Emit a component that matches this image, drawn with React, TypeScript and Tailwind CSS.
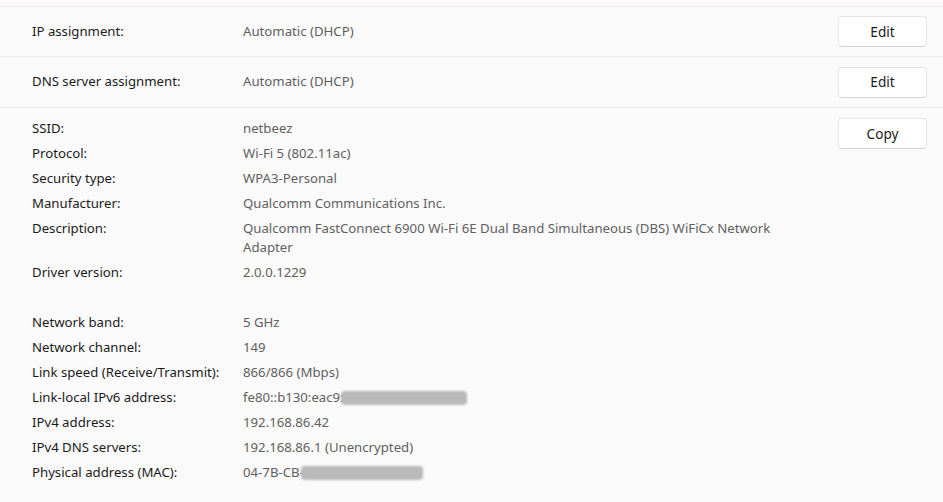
import React from "react";

const Btn = ({ children }: { children: React.ReactNode }) => (
  <button className="w-[89px] h-[31px] shrink-0 rounded-[4px] border border-[#e5e5e5] border-b-[#d4d4d4] bg-white text-[13.6px] text-[#1b1b1b] leading-none">
    {children}
  </button>
);

const Blur = ({ w }: { w: number }) => (
  <span
    className="inline-block align-middle h-[14px] rounded-[4px] bg-[#b9b9b9] blur-[1px] -ml-[3px]"
    style={{ width: w }}
  />
);

const details: [string, React.ReactNode][] = [
  ["SSID:", "netbeez"],
  ["Protocol:", "Wi-Fi 5 (802.11ac)"],
  ["Security type:", "WPA3-Personal"],
  ["Manufacturer:", "Qualcomm Communications Inc."],
  [
    "Description:",
    "Qualcomm FastConnect 6900 Wi-Fi 6E Dual Band Simultaneous (DBS) WiFiCx Network Adapter",
  ],
  ["Driver version:", "2.0.0.1229"],
  ["", ""],
  ["Network band:", "5 GHz"],
  ["Network channel:", "149"],
  ["Link speed (Receive/Transmit):", "866/866 (Mbps)"],
  [
    "Link-local IPv6 address:",
    <span key="v6">
      fe80::b130:eac9:<Blur w={126} />
    </span>,
  ],
  ["IPv4 address:", "192.168.86.42"],
  ["IPv4 DNS servers:", "192.168.86.1 (Unencrypted)"],
  [
    "Physical address (MAC):",
    <span key="mac">
      04-7B-CB-<Blur w={122} />
    </span>,
  ],
];

export default function App() {
  return (
    <div
      className="w-[943px] h-[502px] overflow-hidden bg-[#fbfafa] text-[13.2px]"
      style={{ fontFamily: '"Noto Sans", "Open Sans", sans-serif' }}
    >
      <div className="h-[7px] border-b border-[#f5e9e9]" />
      <div className="h-[50px] flex items-center border-b border-[#f3ecec] pl-[32px] pr-[16px]">
        <div className="w-[211px] text-[#1a1a1a]">IP assignment:</div>
        <div className="flex-1 text-[#606060]">Automatic (DHCP)</div>
        <Btn>Edit</Btn>
      </div>
      <div className="h-[51px] flex items-center border-b border-[#f5e9e9] pl-[32px] pr-[16px]">
        <div className="w-[211px] text-[#1a1a1a]">DNS server assignment:</div>
        <div className="flex-1 text-[#606060]">Automatic (DHCP)</div>
        <Btn>Edit</Btn>
      </div>
      <div className="flex pt-[10px] pl-[32px] pr-[16px]">
        <div className="flex-1 flex flex-col gap-[6px] pt-[1px]">
          {details.map(([k, v], i) => (
            <div key={i} className="flex leading-[19px] min-h-[19px]">
              <div className="w-[211px] shrink-0 text-[#1a1a1a]">{k}</div>
              <div className="w-[548px] text-[#606060]">{v}</div>
            </div>
          ))}
        </div>
        <Btn>Copy</Btn>
      </div>
    </div>
  );
}
